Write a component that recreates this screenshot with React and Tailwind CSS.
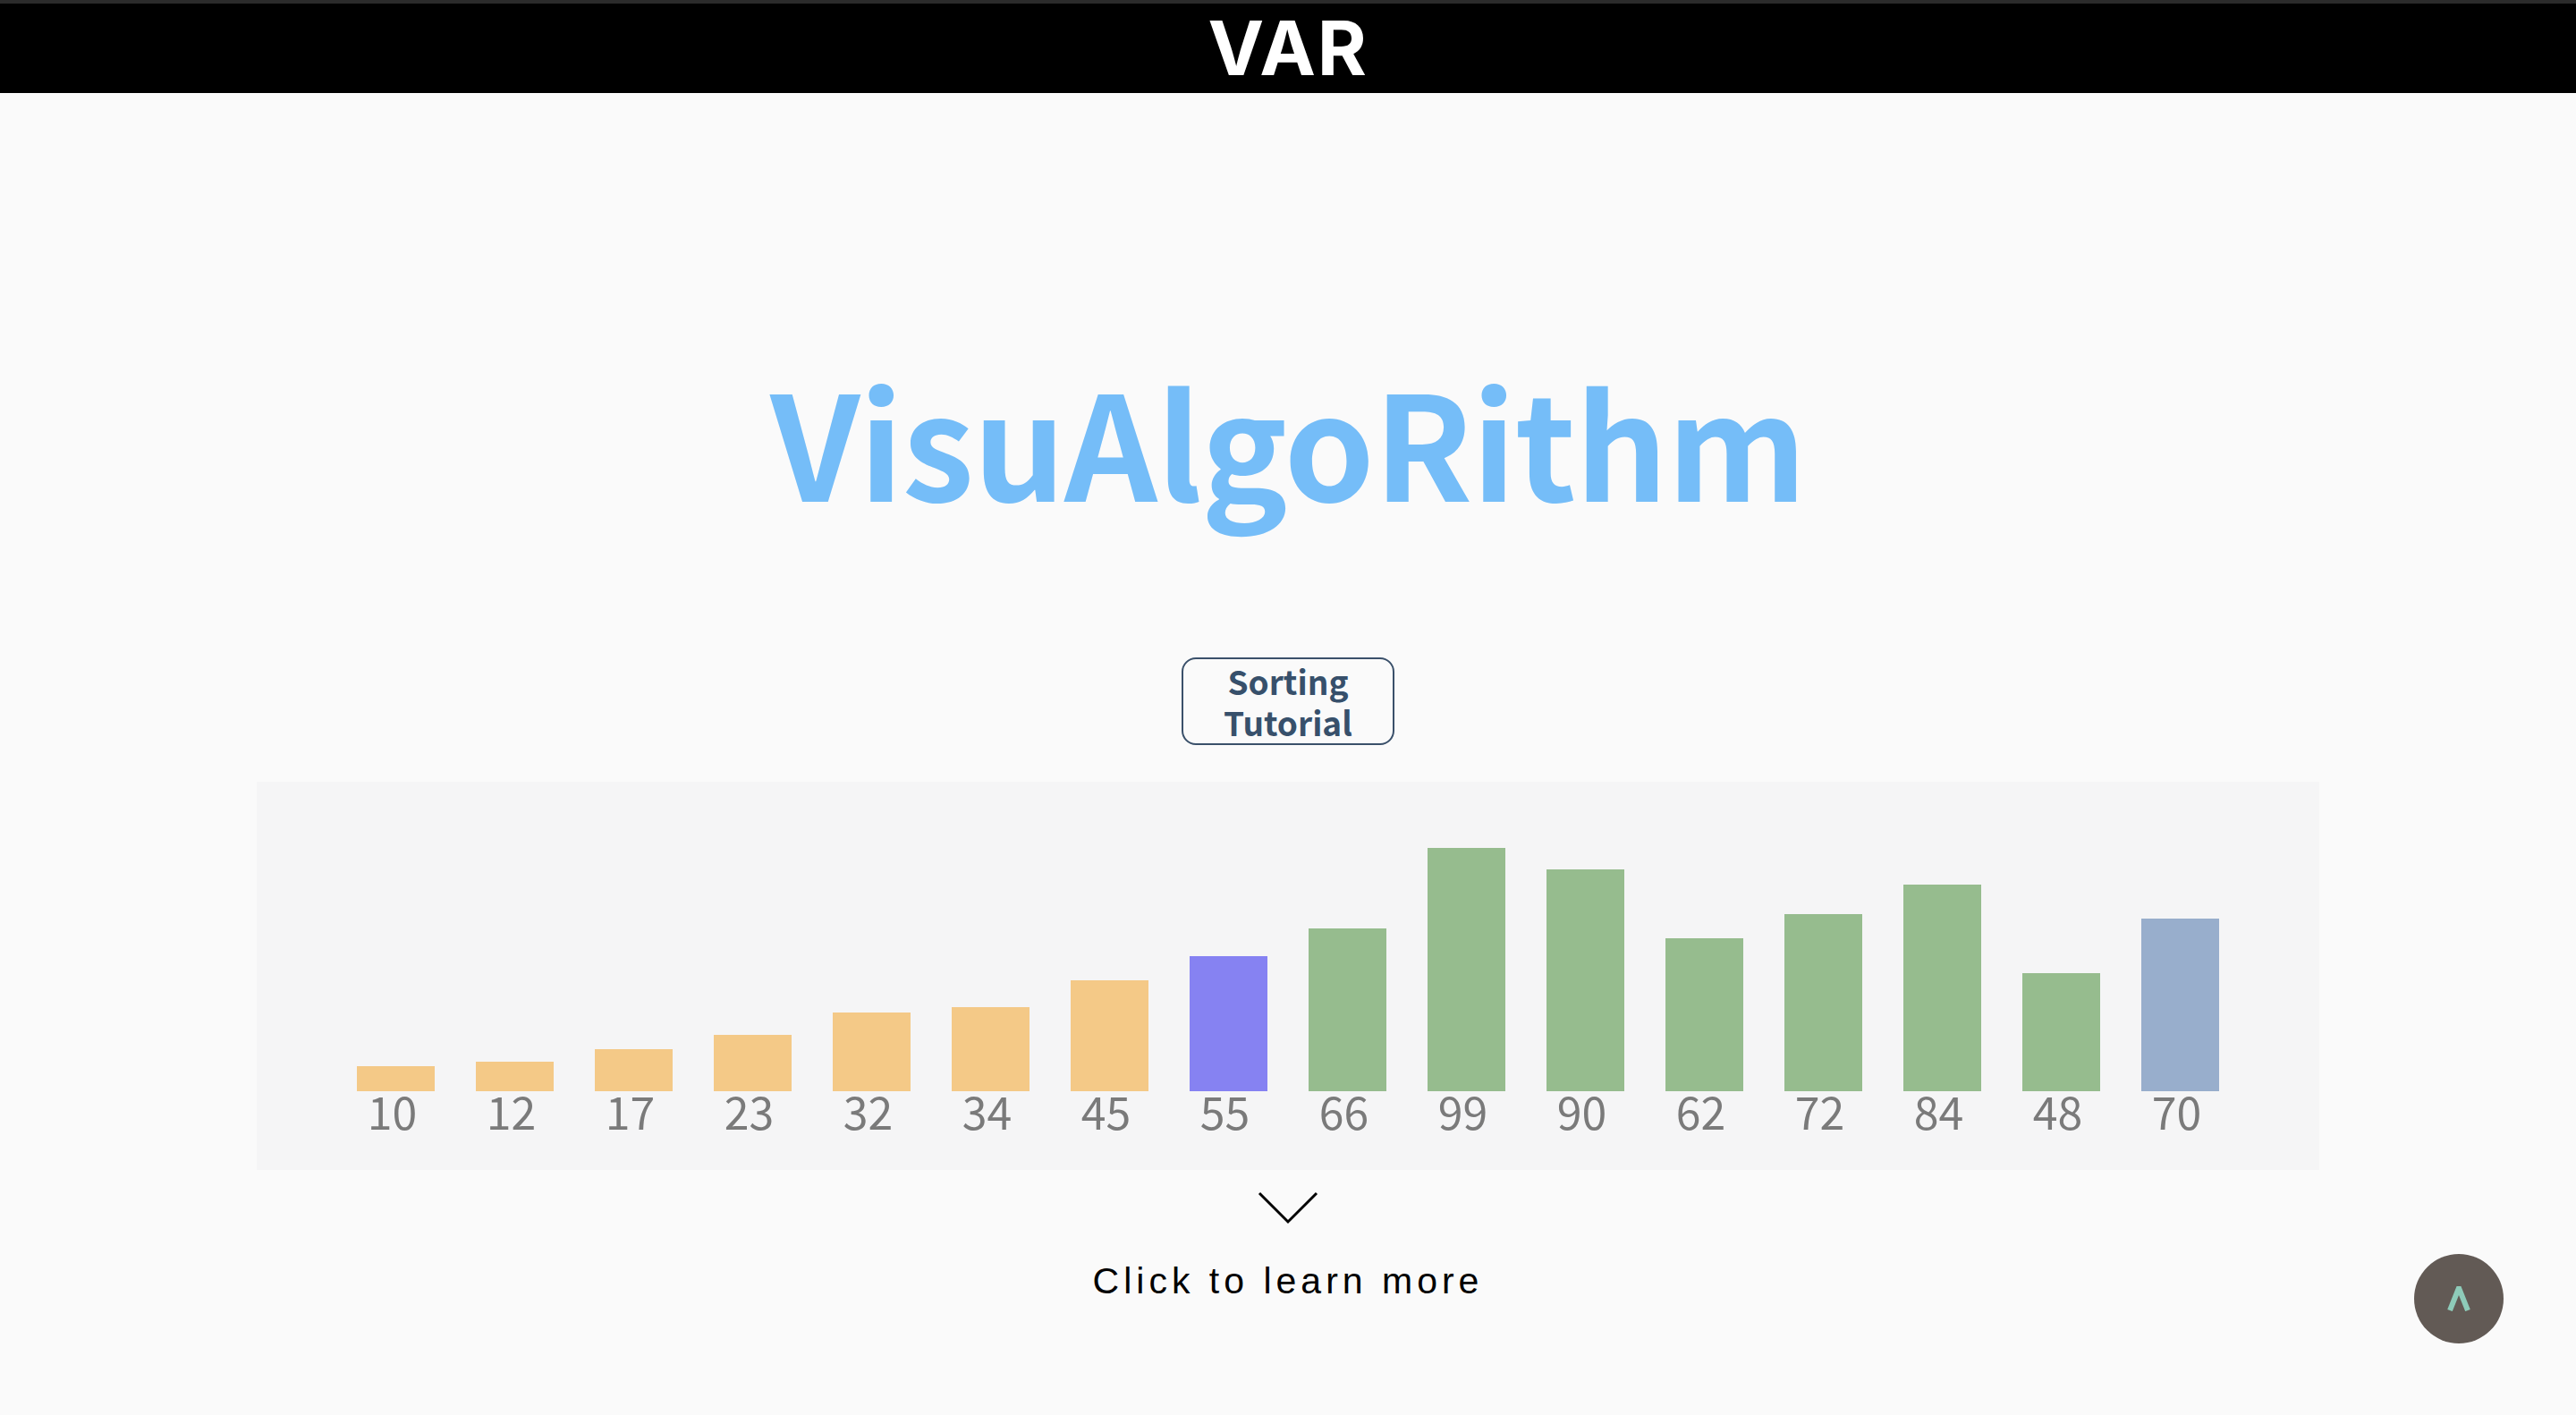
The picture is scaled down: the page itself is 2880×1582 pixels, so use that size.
import React from "react";

const DATA = [
  { v: 10, c: "bg-[#f4c987]" },
  { v: 12, c: "bg-[#f4c987]" },
  { v: 17, c: "bg-[#f4c987]" },
  { v: 23, c: "bg-[#f4c987]" },
  { v: 32, c: "bg-[#f4c987]" },
  { v: 34, c: "bg-[#f4c987]" },
  { v: 45, c: "bg-[#f4c987]" },
  { v: 55, c: "bg-[#8682f2]" },
  { v: 66, c: "bg-[#96bc8e]" },
  { v: 99, c: "bg-[#96bc8e]" },
  { v: 90, c: "bg-[#96bc8e]" },
  { v: 62, c: "bg-[#96bc8e]" },
  { v: 72, c: "bg-[#96bc8e]" },
  { v: 84, c: "bg-[#96bc8e]" },
  { v: 48, c: "bg-[#96bc8e]" },
  { v: 70, c: "bg-[#98aecc]" },
];

const SS = { fontFamily: '"Noto Sans CJK JP", "Noto Sans", sans-serif' };

export default function App() {
  return (
    <div className="min-h-screen bg-[#fafafa] flex flex-col items-center">
      <header className="w-full h-[104px] bg-black border-t-4 border-[#2b2b2b] flex items-center justify-center">
        <span
          className="text-white font-bold text-[84px] leading-none tracking-[0.02em]"
          style={{ fontFamily: 'Inter, "Open Sans", sans-serif' }}
        >
          VAR
        </span>
      </header>

      <h1
        className="mt-[306px] text-[162px] leading-none font-bold tracking-[-1px] text-[#75bdf8]"
        style={SS}
      >
        VisuAlgoRithm
      </h1>

      <button
        className="mt-[163px] w-[238px] h-[98px] border-2 border-[#3a506a] rounded-[16px] text-[37px] leading-[46px] font-bold text-[#37506b] flex flex-col items-center justify-center"
        style={SS}
      >
        <span>Sorting</span>
        <span>Tutorial</span>
      </button>

      <div className="mt-[41px] w-[2306px] h-[434px] bg-[#f5f5f6] flex justify-center">
        <div className="flex gap-[46px]">
          {DATA.map((d, i) => (
            <div key={i} className="w-[87px] flex flex-col items-center">
              <div className="h-[346px] w-full flex items-end">
                <div
                  className={`w-full ${d.c}`}
                  style={{ height: Math.round(d.v * 2.75) }}
                />
              </div>
              <span
                className="mt-[-4px] mr-[8px] text-[50px] leading-[50px] text-[#7a7a7a]"
                style={SS}
              >
                {d.v}
              </span>
            </div>
          ))}
        </div>
      </div>

      <svg
        className="mt-[24px]"
        width="68"
        height="37"
        viewBox="0 0 68 37"
        fill="none"
      >
        <polyline
          points="2,2 34,34 66,2"
          stroke="#000"
          strokeWidth="3"
        />
      </svg>

      <p
        className="mt-[39px] text-[41px] leading-[48px] tracking-[5px] text-black"
        style={{ fontFamily: '"Liberation Sans", Arial, sans-serif' }}
      >
        Click to learn more
      </p>

      <button className="fixed bottom-[80px] right-[81px] w-[100px] h-[100px] rounded-full bg-[#625a55] flex items-center justify-center">
        <svg width="28" height="28" viewBox="0 0 28 28" fill="none">
          <polyline
            points="4,27 14,2 24,27"
            stroke="#8ecbb9"
            strokeWidth="6"
            strokeLinejoin="miter"
          />
        </svg>
      </button>
    </div>
  );
}
